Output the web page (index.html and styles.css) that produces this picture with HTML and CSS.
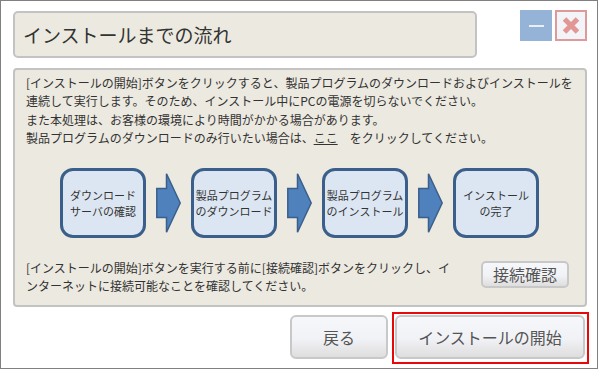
FILE: index.html
```html
<!DOCTYPE html>
<html lang="ja">
<head>
<meta charset="utf-8">
<title>インストールまでの流れ</title>
<link rel="stylesheet" href="styles.css">
</head>
<body>
<div class="window">
  <header class="head">
    <div class="title">インストールまでの流れ</div>
    <div class="controls">
      <button class="min" aria-label="最小化"><span class="min-bar"></span></button>
      <button class="close" aria-label="閉じる">
        <svg width="28" height="27" viewBox="0 0 28 27">
          <path d="M7.5 7 L20.5 20 M20.5 7 L7.5 20" stroke="#E39795" stroke-width="5" fill="none"/>
        </svg>
      </button>
    </div>
  </header>

  <section class="panel">
    <p class="intro">[インストールの開始]ボタンをクリックすると、製品プログラムのダウンロードおよびインストールを<br>連続して実行します。そのため、インストール中にPCの電源を切らないでください。<br>また本処理は、お客様の環境により時間がかかる場合があります。<br>製品プログラムのダウンロードのみ行いたい場合は、<a class="link" href="#">ここ</a>　をクリックしてください。</p>

    <div class="flow">
      <div class="step"><span class="ln">ダウンロード</span><span class="ln">サーバの確認</span></div>
      <svg class="arrow" width="25" height="60" viewBox="0 0 25 60"><polygon points="0.8,15.5 10.5,15.5 10.5,0.8 24.2,30 10.5,59.2 10.5,44.5 0.8,44.5" fill="#4F81BD" stroke="#3A5F8B" stroke-width="1.5" stroke-linejoin="miter"/></svg>
      <div class="step"><span class="ln">製品プログラム</span><span class="ln">のダウンロード</span></div>
      <svg class="arrow" width="25" height="60" viewBox="0 0 25 60"><polygon points="0.8,15.5 10.5,15.5 10.5,0.8 24.2,30 10.5,59.2 10.5,44.5 0.8,44.5" fill="#4F81BD" stroke="#3A5F8B" stroke-width="1.5" stroke-linejoin="miter"/></svg>
      <div class="step"><span class="ln">製品プログラム</span><span class="ln">のインストール</span></div>
      <svg class="arrow" width="25" height="60" viewBox="0 0 25 60"><polygon points="0.8,15.5 10.5,15.5 10.5,0.8 24.2,30 10.5,59.2 10.5,44.5 0.8,44.5" fill="#4F81BD" stroke="#3A5F8B" stroke-width="1.5" stroke-linejoin="miter"/></svg>
      <div class="step"><span class="ln">インストール</span><span class="ln">の完了</span></div>
    </div>

    <div class="check">
      <p class="note">[インストールの開始]ボタンを実行する前に[接続確認]ボタンをクリックし、イ<br>ンターネットに接続可能なことを確認してください。</p>
      <button class="btn small">接続確認</button>
    </div>
  </section>

  <footer class="foot">
    <button class="btn big back">戻る</button>
    <div class="focus"><button class="btn big start">インストールの開始</button></div>
  </footer>
</div>
</body>
</html>
```

FILE: styles.css
```css
html, body {
  margin: 0;
  padding: 0;
  background: #ffffff;
}

body {
  font-family: "Noto Sans CJK JP", "Noto Sans", sans-serif;
  color: #333333;
}

.window {
  width: 598px;
  height: 369px;
  box-sizing: border-box;
  border: 1px solid #808080;
  padding: 9px 10px 0 12px;
  background: #ffffff;
}

.head {
  display: flex;
  align-items: flex-start;
}

.title {
  margin-top: 1px;
  width: 464px;
  height: 47px;
  box-sizing: border-box;
  border: 2px solid #C3C3C3;
  border-radius: 5px;
  background: #ECEAE0;
  display: flex;
  align-items: center;
  padding-left: 8px;
  font-size: 19px;
  color: #333333;
}

.controls {
  margin-left: auto;
  display: flex;
  gap: 3px;
}

.min {
  width: 32px;
  height: 31px;
  border: none;
  padding: 0;
  background: #95B3D7;
  display: flex;
  align-items: center;
  justify-content: center;
}

.min-bar {
  display: block;
  width: 15px;
  height: 2px;
  background: #E9EFF7;
}

.close {
  width: 32px;
  height: 31px;
  box-sizing: border-box;
  border: 2px solid #DE9A98;
  padding: 0;
  background: #F3F4F8;
  display: flex;
  align-items: center;
  justify-content: center;
}

.close svg {
  display: block;
}

.panel {
  margin-top: 10px;
  border: 2px solid #C3C3C3;
  border-radius: 4px;
  background: #ECE9E0;
  padding: 4px 16px 10.5px 11px;
}

.intro {
  margin: 0;
  font-size: 12px;
  line-height: 18.3px;
  color: #333333;
  white-space: nowrap;
}

.link {
  color: #333333;
  text-decoration: underline;
}

.flow {
  display: flex;
  align-items: center;
  margin-top: 21px;
  padding-left: 34px;
}

.step {
  width: 86px;
  height: 70px;
  box-sizing: border-box;
  border: 3px solid #3A5F8B;
  border-radius: 13px;
  background: #DCE6F2;
  display: flex;
  flex-direction: column;
  align-items: center;
  justify-content: center;
  text-align: center;
  font-size: 11px;
  line-height: 16px;
  color: #333333;
  white-space: nowrap;
}

.ln {
  display: block;
}

.arrow {
  display: block;
  margin: 0 10px;
  flex: none;
}

.check {
  display: flex;
  align-items: flex-start;
  justify-content: space-between;
  margin-top: 21.3px;
}

.note {
  margin: 0;
  font-size: 12px;
  line-height: 17.5px;
  color: #333333;
  white-space: nowrap;
}

.btn {
  box-sizing: border-box;
  border: 2px solid #C8C8C8;
  border-radius: 5px;
  background: linear-gradient(#F6F7FA 0%, #F1F2F6 55%, #E9E9EB 75%, #DEDEDE 100%);
  color: #555555;
  font-family: "Noto Sans CJK JP", "Noto Sans", sans-serif;
  padding: 0;
  line-height: 1;
}

.small {
  width: 88px;
  height: 27px;
  margin-top: 1.5px;
  font-size: 16px;
}

.foot {
  display: flex;
  justify-content: flex-end;
  align-items: flex-start;
  gap: 4px;
  margin-top: 5px;
  margin-right: -2px;
}

.big {
  height: 44px;
  font-size: 16px;
  border-radius: 6px;
}

.back {
  width: 98px;
  margin-top: 3px;
}

.focus {
  border: 2px solid #E8080A;
  padding: 1px 2px 3px 1px;
  display: flex;
}

.start {
  width: 190px;
}
```
